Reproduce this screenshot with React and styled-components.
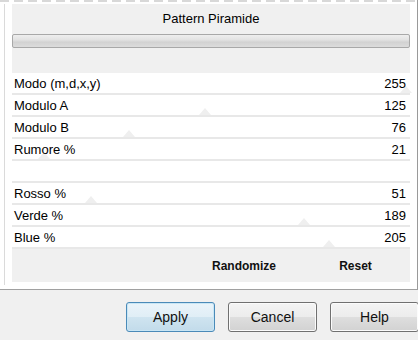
import React from "react";
import styled, { createGlobalStyle } from "styled-components";

const Global = createGlobalStyle`
  html, body {
    margin: 0;
    padding: 0;
    background: #f0f0f0;
    font-family: "Liberation Sans", Arial, sans-serif;
  }
`;

const Page = styled.div`
  width: 418px;
  height: 340px;
  overflow: hidden;
  display: flex;
  flex-direction: column;
`;

const Sheet = styled.div`
  height: 290px;
  background: #fff;
  border-bottom: 1px solid #a0a0a0;
  border-right: 1px solid #9a9a9a;
  box-sizing: border-box;
  display: flex;
  flex-direction: column;
`;

const TopStrip = styled.div`
  height: 4px;
  background: repeating-linear-gradient(
    90deg,
    #d8d8d8 0px,
    #d8d8d8 9px,
    #fff 9px,
    #fff 14px
  );
  background-size: 100% 2px;
  background-repeat: no-repeat;
`;

const Frame = styled.div`
  flex: 1;
  margin-left: 4px;
  margin-bottom: 4px;
  border-left: 1px solid #dadada;
  padding: 0 7px 0 7px;
  display: flex;
  flex-direction: column;
`;

const Header = styled.div`
  height: 69px;
  background: #f0f0f0;
  display: flex;
  flex-direction: column;
  padding-top: 7px;
  box-sizing: border-box;
`;

const Title = styled.div`
  font-size: 13px;
  text-align: center;
  line-height: 15px;
  color: #000;
`;

const Bar = styled.div`
  margin-top: 8px;
  height: 14px;
  border: 1px solid #a8a8a8;
  border-radius: 2px;
  box-sizing: border-box;
  background: linear-gradient(#eeeeee 0%, #e2e2e2 40%, #d2d2d2 60%, #dcdcdc 100%);
`;

const Row = styled.div`
  position: relative;
  height: 22px;
  box-sizing: border-box;
  border-bottom: 2px solid #e8e8e8;
  display: flex;
  align-items: center;
  justify-content: space-between;
  padding: 0 4px 0 2px;
  font-size: 13px;
  color: #000;
`;

const Label = styled.span`
  position: relative;
  z-index: 1;
`;

const Value = styled.span`
  position: relative;
  z-index: 1;
`;

const Thumb = styled.div`
  position: absolute;
  bottom: 0;
  width: 0;
  height: 0;
  margin-left: -6px;
  border-left: 6px solid transparent;
  border-right: 6px solid transparent;
  border-bottom: 7px solid #efefef;
`;

const Footer = styled.div`
  height: 33px;
  background: #f0f0f0;
  display: grid;
  grid-template-columns: 200px 63px 64px 33px;
  align-items: center;
  font-size: 12px;
  font-weight: bold;
  color: #111;
`;

const Link = styled.span`
  grid-column: ${(p) => p.col};
  text-align: center;
  white-space: nowrap;
`;

const Buttons = styled.div`
  flex: 1;
  display: flex;
  justify-content: flex-end;
  align-items: flex-start;
  gap: 13px;
  padding-top: 12px;
  margin-right: -1px;
`;

const Button = styled.button`
  width: 89px;
  height: 30px;
  font-family: "Liberation Sans", Arial, sans-serif;
  font-size: 14px;
  color: #111;
  border-radius: 3px;
  border: 1px solid ${(p) => (p.primary ? "#4a8ab8" : "#707070")};
  box-shadow: inset 0 0 0 1px ${(p) => (p.primary ? "#c9e6f5" : "#fbfbfb")};
  background: ${(p) =>
    p.primary
      ? "linear-gradient(#eaf4fa 0%, #e0eef6 50%, #cfe4f0 51%, #c2dbea 100%)"
      : "linear-gradient(#f4f4f4 0%, #ececec 50%, #dedede 51%, #d2d2d2 100%)"};
  padding: 0;
`;

const params = [
  { label: "Modo (m,d,x,y)", value: 255 },
  { label: "Modulo A", value: 125 },
  { label: "Modulo B", value: 76 },
  { label: "Rumore %", value: 21 },
  null,
  { label: "Rosso %", value: 51 },
  { label: "Verde %", value: 189 },
  { label: "Blue %", value: 205 },
];

export default function App() {
  return (
    <Page>
      <Global />
      <Sheet>
        <TopStrip />
        <Frame>
          <Header>
            <Title>Pattern Piramide</Title>
            <Bar />
          </Header>
          {params.map((p, i) =>
            p ? (
              <Row key={i}>
                <Thumb style={{ left: `${(p.value / 255) * 99}%` }} />
                <Label>{p.label}</Label>
                <Value>{p.value}</Value>
              </Row>
            ) : (
              <Row key={i} />
            )
          )}
          <Footer>
            <Link col={2}>Randomize</Link>
            <Link col={4}>Reset</Link>
          </Footer>
        </Frame>
      </Sheet>
      <Buttons>
        <Button primary>Apply</Button>
        <Button>Cancel</Button>
        <Button>Help</Button>
      </Buttons>
    </Page>
  );
}
